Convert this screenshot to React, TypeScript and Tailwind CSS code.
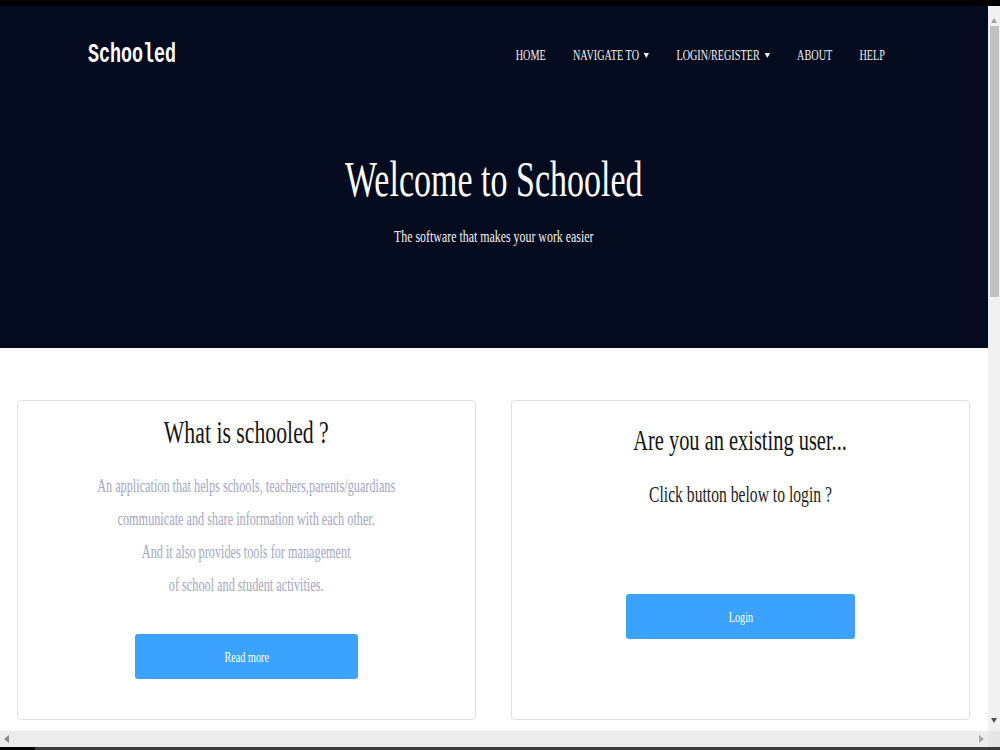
import React from "react";

const serif = { fontFamily: '"Liberation Serif", "Times New Roman", serif' };
const mono = { fontFamily: '"Liberation Mono", "Courier New", monospace' };

function Caret() {
  return (
    <span className="ml-[7px] inline-block h-0 w-0 border-l-[4.5px] border-r-[4.5px] border-t-[5px] border-l-transparent border-r-transparent border-t-[#f2f2f2] align-middle" />
  );
}

function NavBar() {
  const items: { label: string; caret?: boolean }[] = [
    { label: "HOME" },
    { label: "NAVIGATE TO", caret: true },
    { label: "LOGIN/REGISTER", caret: true },
    { label: "ABOUT" },
    { label: "HELP" },
  ];
  return (
    <ul className="mt-[9px] flex origin-right scale-x-[0.68] items-center gap-[40px] whitespace-nowrap text-[15px] leading-none text-[#f2f2f2]">
      {items.map((it) => (
        <li key={it.label} className="flex items-center">
          <span>{it.label}</span>
          {it.caret && <Caret />}
        </li>
      ))}
    </ul>
  );
}

function Hero() {
  return (
    <header className="flex h-[342px] shrink-0 flex-col bg-[#050b1f] pt-[33px]" style={serif}>
      <div className="flex items-start justify-between pl-[88px] pr-[103px]">
        <div
          className="mt-[3px] inline-block origin-left scale-x-[0.68] text-[27px] font-bold leading-none text-white"
          style={mono}
        >
          Schooled
        </div>
        <NavBar />
      </div>
      <h1 className="mt-[85px] text-center text-[50px] leading-none text-white">
        <span className="inline-block scale-x-[0.68] whitespace-nowrap">Welcome to Schooled</span>
      </h1>
      <p className="mt-[24px] text-center text-[17.5px] leading-none text-[#f4f4f4]">
        <span className="inline-block scale-x-[0.68] whitespace-nowrap">
          The software that makes your work easier
        </span>
      </p>
    </header>
  );
}

function Card({ children }: { children: React.ReactNode }) {
  return (
    <div className="flex h-[320px] flex-col items-center rounded-[4px] border border-[#e2e2e2] bg-white">
      {children}
    </div>
  );
}

function BlueButton({ label, width }: { label: string; width: string }) {
  return (
    <button
      type="button"
      className={`${width} flex h-[45px] items-center justify-center rounded-[3px] bg-[#3ba3fd] pt-[2px] text-[15px] leading-none text-white`}
    >
      <span className="inline-block scale-x-[0.68] whitespace-nowrap">{label}</span>
    </button>
  );
}

function Cards() {
  return (
    <section className="grid grid-cols-2 gap-[35px] pl-[17px] pr-[18px] pt-[52px]" style={serif}>
      <Card>
        <h2 className="mt-[15px] text-[32px] leading-none text-[#141414]">
          <span className="inline-block scale-x-[0.68] whitespace-nowrap">What is schooled ?</span>
        </h2>
        <p className="mt-[22px] text-center text-[18px] leading-[33px] text-[#a3a7c2]">
          <span className="inline-block scale-x-[0.68] whitespace-nowrap">
            An application that helps schools, teachers,parents/guardians
            <br />
            communicate and share information with each other.
            <br />
            And it also provides tools for management
            <br />
            of school and student activities.
          </span>
        </p>
        <div className="mt-[32px]">
          <BlueButton label="Read more" width="w-[223px]" />
        </div>
      </Card>
      <Card>
        <h2 className="mt-[24px] text-[30px] leading-none text-[#141414]">
          <span className="inline-block scale-x-[0.68] whitespace-nowrap">Are you an existing user...</span>
        </h2>
        <p className="mt-[28px] text-[23px] leading-none text-[#1c1c1c]">
          <span className="inline-block scale-x-[0.68] whitespace-nowrap">Click button below to login ?</span>
        </p>
        <div className="mt-[88px]">
          <BlueButton label="Login" width="w-[229px]" />
        </div>
      </Card>
    </section>
  );
}

function VScroll() {
  return (
    <aside className="flex w-[12px] shrink-0 flex-col items-center bg-[#f1f1f1] pt-[12px]">
      <span className="h-0 w-0 border-b-[5px] border-l-[3.5px] border-r-[3.5px] border-b-[#a3a3a3] border-l-transparent border-r-transparent" />
      <div className="ml-[1px] mt-[3px] h-[271px] w-[9px] bg-[#c1c1c1]" />
      <div className="flex-1" />
      <span className="mb-[8px] h-0 w-0 border-l-[3.5px] border-r-[3.5px] border-t-[5px] border-l-transparent border-r-transparent border-t-[#505050]" />
    </aside>
  );
}

function HScroll() {
  return (
    <div className="flex h-[16px] shrink-0">
      <div className="flex flex-1 items-center justify-between bg-[#ececec] px-[4px]">
        <span className="h-0 w-0 border-b-[4px] border-r-[5px] border-t-[4px] border-b-transparent border-r-[#8a8a8a] border-t-transparent" />
        <span className="h-0 w-0 border-b-[4px] border-l-[5px] border-t-[4px] border-b-transparent border-l-[#a8a8a8] border-t-transparent" />
      </div>
      <div className="w-[12px] bg-[#e6e6e6]" />
    </div>
  );
}

export default function App() {
  return (
    <div className="flex h-[750px] w-[1000px] flex-col overflow-hidden bg-black">
      <div className="h-[6px] shrink-0 bg-black" />
      <div className="flex min-h-0 flex-1">
        <main className="flex flex-1 flex-col bg-white">
          <Hero />
          <Cards />
        </main>
        <VScroll />
      </div>
      <HScroll />
      <div className="flex h-[3px] shrink-0">
        <div className="w-[35px] bg-black" />
        <div className="flex-1 bg-[#3a3a3a]" />
      </div>
    </div>
  );
}
